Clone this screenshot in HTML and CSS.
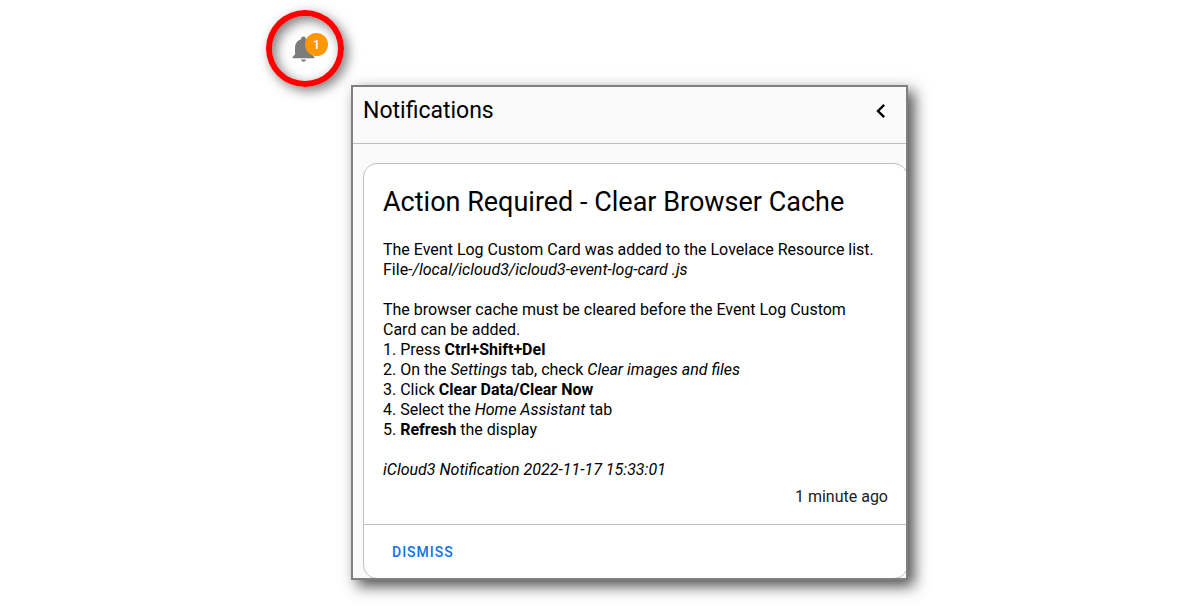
FILE: index.html
```html
<!DOCTYPE html>
<html lang="en">
<head>
<meta charset="utf-8">
<meta name="viewport" content="width=device-width, initial-scale=1">
<title>Notifications</title>
<link rel="stylesheet" href="styles.css">
</head>
<body>
<main class="scene">
  <button class="bell" type="button" aria-label="1 notification">
    <span class="bell-icon">
      <svg viewBox="0 0 24 24" aria-hidden="true"><path d="M21 19v1H3v-1l2-2v-6c0-3.1 2.03-5.83 5-6.71V4a2 2 0 0 1 4 0v.29c2.97.88 5 3.61 5 6.71v6l2 2M14 21a2 2 0 0 1-4 0"/></svg>
      <span class="badge">1</span>
    </span>
  </button>
  <section class="panel">
    <header class="panel-header">
      <h1>Notifications</h1>
      <button class="close" type="button" aria-label="Close">
        <svg viewBox="0 0 24 24" aria-hidden="true"><path d="M15.41 16.58 10.83 12l4.58-4.59L14 6l-6 6 6 6z"/></svg>
      </button>
    </header>
    <div class="panel-body">
      <article class="card">
        <div class="card-content">
          <h2>Action Required - Clear Browser Cache</h2>
          <p>The Event Log Custom Card was added to the Lovelace Resource list.<br>File-<em>/local/icloud3/icloud3-event-log-card .js</em></p>
          <p>The browser cache must be cleared before the Event Log Custom Card can be added.<br>
          1. Press <b>Ctrl+Shift+Del</b><br>
          2. On the <em>Settings</em> tab, check <em>Clear images and files</em><br>
          3. Click <b>Clear Data/Clear Now</b><br>
          4. Select the <em>Home Assistant</em> tab<br>
          5. <b>Refresh</b> the display</p>
          <p><em>iCloud3 Notification 2022-11-17 15:33:01</em></p>
          <div class="time">1 minute ago</div>
        </div>
        <footer class="card-actions"><button class="dismiss" type="button">DISMISS</button></footer>
      </article>
    </div>
  </section>
</main>
</body>
</html>
```
FILE: styles.css
```css
* { box-sizing: border-box; }
body {
  margin: 0;
  background: #fff;
  color: #000;
  font-family: Roboto, "Liberation Sans", sans-serif;
  font-size: 16px;
  line-height: 20px;
}
.scene {
  max-width: 670px;
  margin: 0 auto;
  padding: 10px 27px 24px 0;
}
button { font: inherit; border: 0; background: none; padding: 0; }
.bell {
  display: flex;
  align-items: center;
  justify-content: center;
  width: 78px;
  height: 77px;
  margin-left: 1px;
  border: 6px solid #f00;
  border-radius: 50%;
  box-shadow: 4px 4px 12px rgba(0, 0, 0, .5), inset 4px 4px 12px rgba(0, 0, 0, .5);
}
.bell-icon { position: relative; width: 32px; height: 29px; }
.bell-icon svg { display: block; width: 29px; height: 29px; fill: #7b7b7b; }
.badge {
  position: absolute;
  top: -1px;
  right: -7px;
  width: 23px;
  height: 23px;
  border-radius: 50%;
  background: #ff9800;
  color: #fff;
  font-size: 13px;
  font-weight: 500;
  line-height: 23px;
  text-align: center;
}
.panel {
  margin: -2px 0 0 86px;
  border: 2px solid #808080;
  background: #fafafa;
  box-shadow: 6px 6px 14px rgba(0, 0, 0, .7);
  overflow: hidden;
}
.panel-header {
  display: flex;
  align-items: center;
  justify-content: space-between;
  padding: 10px 11px 18px 10px;
  border-bottom: 1px solid #c0c0c0;
}
h1, h2 { margin: 0; font-weight: 400; }
h1 { font-size: 23px; line-height: 26px; }
.close svg { display: block; width: 28px; height: 28px; fill: #000; }
.panel-body { padding: 19px 0 0 10px; }
.card {
  margin: 0 -2px -1px 0;
  border: 1px solid #c0c0c0;
  border-radius: 14px;
  background: #fff;
}
.card-content { padding: 20px 19px 17px; }
h2 { font-size: 27px; line-height: 36px; margin-bottom: 20px; }
p { margin: 0 0 20px; padding-right: 8px; }
p:last-of-type { margin-bottom: 7px; }
.time { text-align: right; color: #212121; }
.card-actions {
  padding: 9px 20px 8px;
  border-top: 1px solid #c0c0c0;
}
.dismiss {
  padding: 8px;
  color: #0b74ee;
  font-size: 14px;
  font-weight: 500;
  letter-spacing: 1px;
}
```
